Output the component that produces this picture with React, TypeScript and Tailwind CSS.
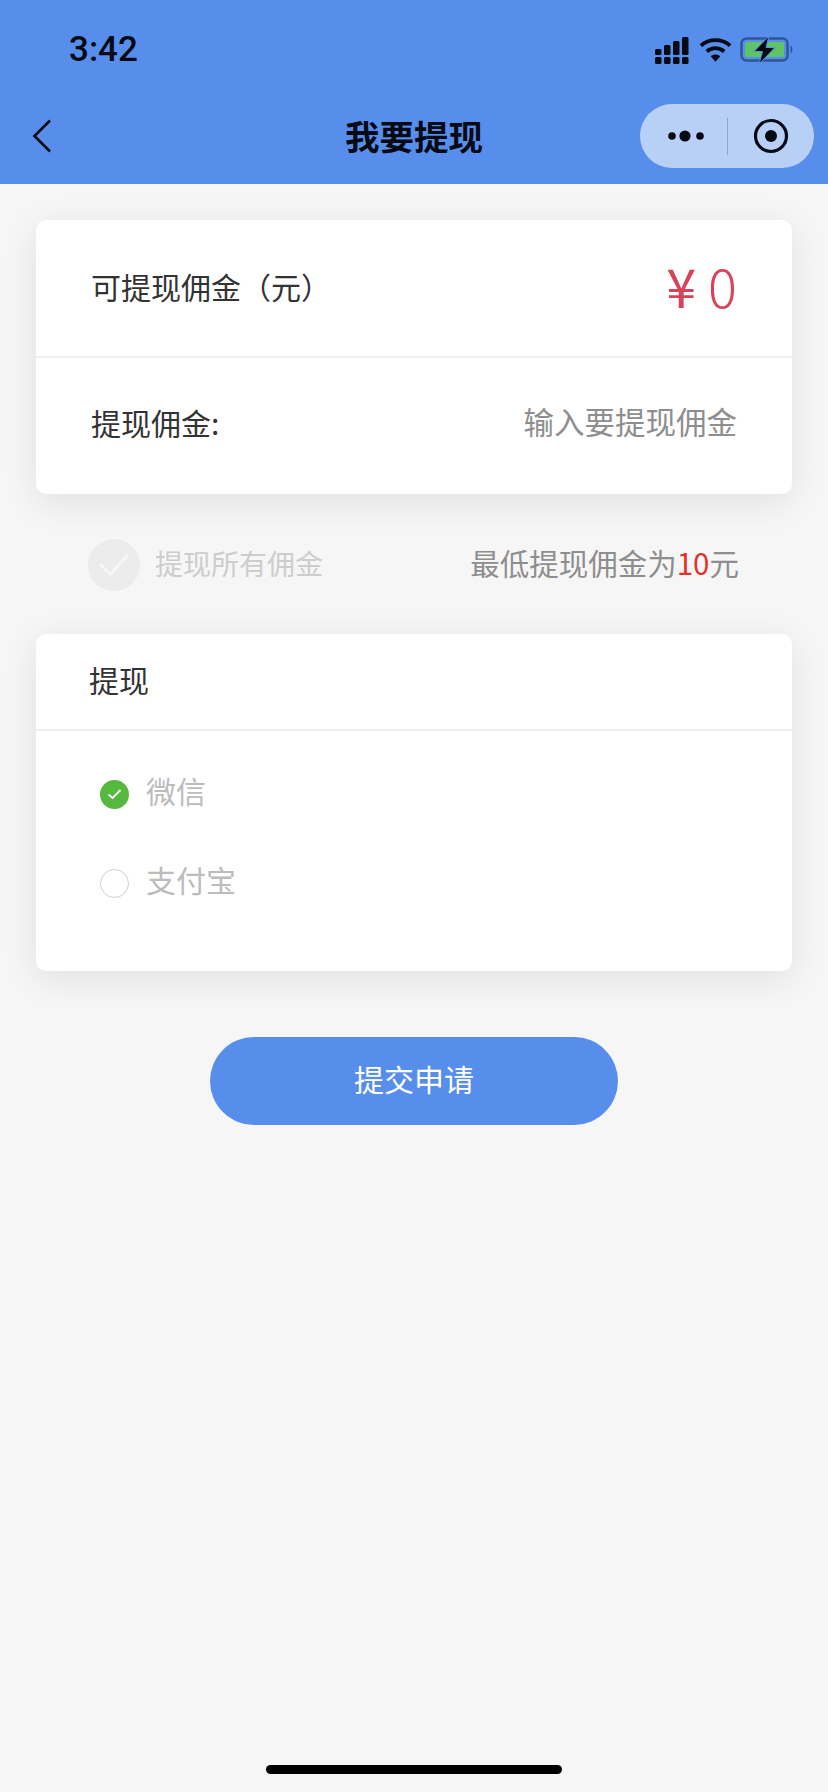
import React from 'react';

const cjk = "font-['Noto_Sans_CJK_SC','Noto_Sans',sans-serif]";

const StatusIcons = () => (
  <div className="flex items-center pt-[2px]">
    <svg width="34" height="27" viewBox="0 0 34 27" className="fill-[#050a14]">
      <rect x="0" y="12" width="6.5" height="6" rx="1.5" />
      <rect x="9" y="8" width="6.5" height="10" rx="1.5" />
      <rect x="18" y="4" width="6.5" height="14" rx="1.5" />
      <rect x="27" y="0" width="6.5" height="18" rx="1.5" />
      <rect x="0" y="20" width="6.5" height="7" rx="1.5" />
      <rect x="9" y="20" width="6.5" height="7" rx="1.5" />
      <rect x="18" y="20" width="6.5" height="7" rx="1.5" />
      <rect x="27" y="20" width="6.5" height="7" rx="1.5" />
    </svg>
    <svg width="33" height="26" viewBox="0 0 34 26" className="ml-[10px]" fill="none">
      <path d="M2 8.5C10.5 1 23.5 1 32 8.5" stroke="#050a14" strokeWidth="4" />
      <path d="M8 14.5C13.5 10 20.5 10 26 14.5" stroke="#050a14" strokeWidth="4" />
      <path d="M12 19.5C15 17 19 17 22 19.5L17 25Z" fill="#050a14" />
    </svg>
    <svg width="56" height="28" viewBox="0 0 56 28" className="ml-[8px]" fill="none">
      <rect x="1.5" y="2.5" width="46" height="22" rx="5" stroke="#2f5596" strokeWidth="2.5" />
      <rect x="5" y="6" width="39" height="15" rx="2" fill="#5ec466" />
      <path d="M50.5 9.5C53 10.5 53 16.5 50.5 17.5Z" fill="#2f5596" />
      <path d="M29 0L14 15.5H22.5L19 28L35 11.5H26Z" fill="#050a14" stroke="#5a8fec" strokeWidth="1" />
    </svg>
  </div>
);

const Header = () => (
  <div className="bg-[#588eeb]">
    <div className="flex h-[88px] items-center justify-between pl-[69px] pr-[32px] pt-[10px]">
      <span className="font-['Roboto',sans-serif] text-[35px] leading-none font-medium text-[#050a14]">3:42</span>
      <StatusIcons />
    </div>
    <div className="grid h-[96px] grid-cols-[1fr_auto_1fr] items-start">
      <div className="pl-[32px] pt-[31px]">
        <svg width="20" height="34" viewBox="0 0 20 34" fill="none">
          <path d="M18 1.5L2.5 17L18 32.5" stroke="#050a14" strokeWidth="2.6" />
        </svg>
      </div>
      <h1 className={`${cjk} pt-[25px] text-[34.5px] leading-[44px] font-bold text-[#050a14]`}>我要提现</h1>
      <div className="flex justify-end pr-[14px] pt-[16px]">
        <div className="flex h-[64px] w-[174px] items-center rounded-full bg-[#b9d0f6]">
          <svg width="87" height="64" viewBox="0 0 87 64" className="fill-[#050a14]">
            <circle cx="32" cy="32" r="3.8" />
            <circle cx="45" cy="32" r="5.6" />
            <circle cx="60" cy="32" r="3.8" />
          </svg>
          <div className="h-[37px] w-px bg-[#8fa6cc]" />
          <svg width="86" height="64" viewBox="0 0 86 64" fill="none">
            <circle cx="43" cy="32" r="15.5" stroke="#050a14" strokeWidth="3.2" />
            <circle cx="43" cy="32" r="6" fill="#050a14" />
          </svg>
        </div>
      </div>
    </div>
  </div>
);

const Card = ({ children, className }: { children: React.ReactNode; className: string }) => (
  <div className={`mx-[36px] overflow-hidden rounded-[10px] bg-white shadow-[0_8px_36px_rgba(0,0,0,0.09)] ${className}`}>{children}</div>
);

const App = () => {
  return (
    <div className={`${cjk} relative flex min-h-[1792px] w-[828px] flex-col bg-[#f6f6f6]`}>
      <Header />

      <Card className="mt-[36px]">
        <div className="flex h-[136px] items-center justify-between pl-[55px] pr-[55px]">
          <span className="pb-[4px] text-[30px] text-[#333333]">可提现佣金（元）</span>
          <span className="pb-[6px] text-[54px] leading-none font-light text-[#d9435a]">
            <span className="font-normal">¥</span> 0
          </span>
        </div>
        <div className="h-[2px] bg-[#eeeeee]" />
        <div className="flex h-[136px] items-center justify-between pl-[55px] pr-[55px]">
          <span className="pb-[8px] text-[30px] text-[#333333]">提现佣金:</span>
          <span className="pb-[8px] text-[30.5px] text-[#8e8e8e]">输入要提现佣金</span>
        </div>
      </Card>

      <div className="flex h-[140px] items-center justify-between pl-[88px] pr-[89px]">
        <div className="flex items-center">
          <div className="mt-[2px] flex h-[52px] w-[52px] items-center justify-center rounded-full bg-[#ececec]">
            <svg width="32" height="24" viewBox="0 0 32 24" fill="none">
              <path d="M2 11L12 21L30 2" stroke="#f8f8f8" strokeWidth="2.4" />
            </svg>
          </div>
          <span className="ml-[15px] pb-[2px] text-[28px] text-[#cdcdcd]">提现所有佣金</span>
        </div>
        <span className="pb-[4px] text-[29.5px] text-[#8e8e8e]">
          最低提现佣金为<span className="text-[#e0332c]">10</span>元
        </span>
      </div>

      <Card className="h-[337px]">
        <div className="flex h-[95px] items-center pb-[5px] pl-[53px] text-[30px] text-[#333333]">提现</div>
        <div className="h-[2px] bg-[#eeeeee]" />
        <div className="flex flex-col gap-[29px] pl-[64px] pt-[33px]">
          <div className="flex h-[60px] items-center">
            <div className="flex h-[29px] w-[29px] items-center justify-center rounded-full bg-[#55b93d]">
              <svg width="15" height="12" viewBox="0 0 15 12" fill="none">
                <path d="M1.5 6.5L5.5 10L13.5 2" stroke="white" strokeWidth="1.8" />
              </svg>
            </div>
            <span className="ml-[17px] pb-[8px] text-[30px] text-[#bcbcbc]">微信</span>
          </div>
          <div className="flex h-[60px] items-center">
            <div className="h-[29px] w-[29px] rounded-full border border-[#cfcfcf] bg-white" />
            <span className="ml-[17px] pb-[8px] text-[30px] text-[#bcbcbc]">支付宝</span>
          </div>
        </div>
      </Card>

      <div className="mt-[66px] flex justify-center">
        <button className="h-[88px] w-[408px] rounded-full bg-[#588eeb] pb-[6px] text-[30px] text-white">提交申请</button>
      </div>

      <div className="absolute bottom-[18px] left-[266px] h-[9px] w-[296px] rounded-full bg-black" />
    </div>
  );
};

export default App;
